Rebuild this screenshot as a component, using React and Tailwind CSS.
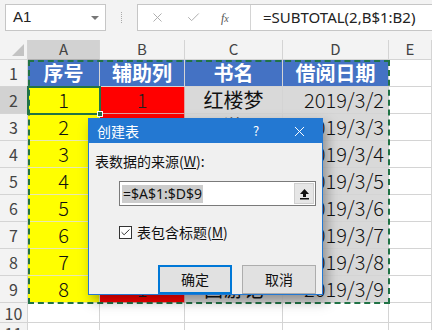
import { Check, X } from 'lucide-react';

const cjk = { fontFamily: '"Noto Sans CJK SC", "Noto Sans", sans-serif' };
const ui = { fontFamily: '"Noto Sans CJK SC", "Liberation Sans", sans-serif' };

const books = ['红楼梦', '西游记', '水浒传', '三国演义', '红楼梦', '西游记', '水浒传', '西游记'];

function HeaderCell({ children, active }) {
  return (
    <div
      className={`flex items-center justify-center border-r border-b border-[#d4d4d4] text-[15px] text-[#444]
        ${active ? 'bg-[#d2d2d2] border-b-[#b0b0b0]' : 'bg-[#f3f3f3]'}`}
    >
      {children}
    </div>
  );
}

function RowNum({ n, active, tall = true }) {
  return (
    <div
      className={`flex justify-center border-r border-b border-[#d4d4d4] text-[16px] text-[#444]
        ${tall ? 'items-end pb-[1px]' : 'items-center'}
        ${active ? 'bg-[#d2d2d2]' : 'bg-[#f3f3f3]'}`}
    >
      {n}
    </div>
  );
}

function Cell({ children, className = '' }) {
  return (
    <div className={`flex items-center border-r border-b border-[#d4d4d4] text-[20px] leading-none ${className}`}>
      {children}
    </div>
  );
}

export default function App() {
  const rows = [1, 2, 3, 4, 5, 6, 7, 8];

  return (
    <div className="relative w-[432px] h-[330px] overflow-hidden bg-white" style={ui}>
      {/* Formula bar */}
      <div className="h-[40px] bg-[#f3f3f3] flex items-start pt-[4px] pl-[5px]">
        <div className="w-[101px] h-[27px] bg-white border border-[#c6c6c6] flex items-center justify-between pl-[7px] pr-[6px]">
          <span className="text-[15px] text-[#222]" style={{ fontFamily: '"Liberation Sans", sans-serif' }}>A1</span>
          <span className="w-0 h-0 border-l-[4px] border-r-[4px] border-t-[4px] border-l-transparent border-r-transparent border-t-[#777]" />
        </div>
        <div className="w-[31px] h-[27px] flex items-center justify-center">
          <div className="h-[11px] border-l border-dotted border-[#aaa]" />
        </div>
        <div className="flex-1 h-[27px] bg-white border border-[#c6c6c6] border-r-0 flex items-center">
          <div className="w-[112px] flex items-center h-full">
            <X className="ml-[12px] text-[#aaa]" size={15} strokeWidth={1.5} />
            <Check className="ml-[21px] text-[#aaa]" size={15} strokeWidth={1.5} />
            <span className="ml-[20px] text-[12px] italic text-[#555]" style={{ fontFamily: '"Liberation Serif", serif' }}>
              f<span className="text-[10px]">x</span>
            </span>
          </div>
          <div className="h-full border-l border-[#d4d4d4] flex items-center pl-[12px]">
            <span className="text-[15px] text-[#222]" style={{ fontFamily: '"Noto Sans", sans-serif' }}>
              =SUBTOTAL(2,B$1:B2)
            </span>
          </div>
        </div>
      </div>

      {/* Sheet */}
      <div className="grid grid-cols-[28px_72px_85px_98px_106px_1fr] grid-rows-[20px_repeat(9,27px)_20px_20px]" style={cjk}>
        <div className="bg-[#f3f3f3] border-r border-b border-[#d4d4d4] flex items-end justify-end pr-[3px] pb-[3px]">
          <svg width="12" height="12" viewBox="0 0 12 12">
            <path d="M12 0 L12 12 L0 12 Z" fill="#c3c3c3" />
          </svg>
        </div>
        <HeaderCell active>A</HeaderCell>
        <HeaderCell>B</HeaderCell>
        <HeaderCell>C</HeaderCell>
        <HeaderCell>D</HeaderCell>
        <HeaderCell>E</HeaderCell>

        <RowNum n={1} />
        {['序号', '辅助列', '书名', '借阅日期'].map(h => (
          <Cell key={h} className="bg-[#4472c4] border-[#4472c4] text-white font-bold justify-center">
            {h}
          </Cell>
        ))}
        <Cell />

        {rows.map(n => (
          <div key={n} className="contents">
            <RowNum n={n + 1} active={n === 1} />
            <Cell className="bg-[#ffff00] border-r-[#e8e8b0] border-b-[#e8e8b0] justify-center font-light text-[#111]">{n}</Cell>
            <Cell className="bg-[#ff0000] border-r-[#e0a0a0] border-b-[#e0a0a0] justify-center font-light text-[#222]">1</Cell>
            <Cell className="bg-[#d9d9d9] border-[#c4c4c4] justify-center text-[#111]">{books[n - 1]}</Cell>
            <Cell className="bg-[#d9d9d9] border-[#c4c4c4] justify-end pr-[4px] font-light text-[#111]">
              2019/3/{n + 1}
            </Cell>
            <Cell />
          </div>
        ))}

        <RowNum n={10} tall={false} />
        <Cell /><Cell /><Cell /><Cell /><Cell />
        <RowNum n={11} tall={false} />
        <Cell /><Cell /><Cell /><Cell /><Cell />
      </div>

      {/* Copy range marching ants */}
      <div className="absolute left-[28px] top-[60px] w-[362px] h-[244px] border-2 border-dashed border-[#217346] pointer-events-none" />

      {/* Active cell A2 */}
      <div className="absolute left-[27px] top-[86px] w-[74px] h-[29px] border-2 border-[#217346] pointer-events-none">
        <div className="absolute -right-[4px] -bottom-[4px] w-[6px] h-[6px] bg-[#217346] border border-white" />
      </div>

      {/* Dialog */}
      <div className="absolute left-[88px] top-[118px] w-[235px] h-[177px] border border-[#2378d2] bg-[#f0f0f0] shadow-[4px_6px_12px_rgba(0,0,0,0.35)] flex flex-col">
        <div className="h-[30px] bg-[#2378d2] flex items-center text-white text-[14px]">
          <span className="pl-[8px] flex-1">创建表</span>
          <span className="w-[20px] text-center text-[13px] mr-[25px]">?</span>
          <X className="mr-[14px]" size={17} strokeWidth={1.4} />
        </div>
        <div className="flex-1 px-[6px] pt-[9px] text-[14px] text-[#111]">
          <div className="leading-[18px]">
            表数据的来源(<span className="underline">W</span>):
          </div>
          <div className="mt-[11px] ml-[24px] w-[197px] h-[25px] bg-white border border-[#7a7a7a] flex items-center justify-between">
            <span className="ml-[2px] px-[1px] bg-[#cccccc] text-[14px] leading-[18px]" style={{ fontFamily: '"Noto Sans", sans-serif' }}>
              =$A$1:$D$9
            </span>
            <div className="w-[20px] h-[21px] mr-[1px] bg-[#e6e6e6] border border-[#cfcfcf] flex items-center justify-center">
              <svg width="11" height="12" viewBox="0 0 11 12">
                <path d="M5.5 1 L10 6 L7 6 L7 9 L4 9 L4 6 L1 6 Z" fill="#111" />
                <rect x="1" y="10" width="9" height="1.5" fill="#111" />
              </svg>
            </div>
          </div>
          <div className="mt-[16px] ml-[24px] flex items-center gap-[5px]">
            <div className="w-[13px] h-[13px] bg-white border border-[#333] flex items-center justify-center">
              <Check size={11} strokeWidth={2} className="text-[#222]" />
            </div>
            <span>表包含标题(<span className="underline">M</span>)</span>
          </div>
          <div className="mt-[22px] ml-[63px] flex gap-[10px]">
            <button className="w-[74px] h-[29px] bg-[#e1e1e1] border-2 border-[#0078d7] text-[14px] text-[#111]">确定</button>
            <button className="w-[74px] h-[29px] bg-[#e1e1e1] border border-[#adadad] text-[14px] text-[#111]">取消</button>
          </div>
        </div>
      </div>
    </div>
  );
}
